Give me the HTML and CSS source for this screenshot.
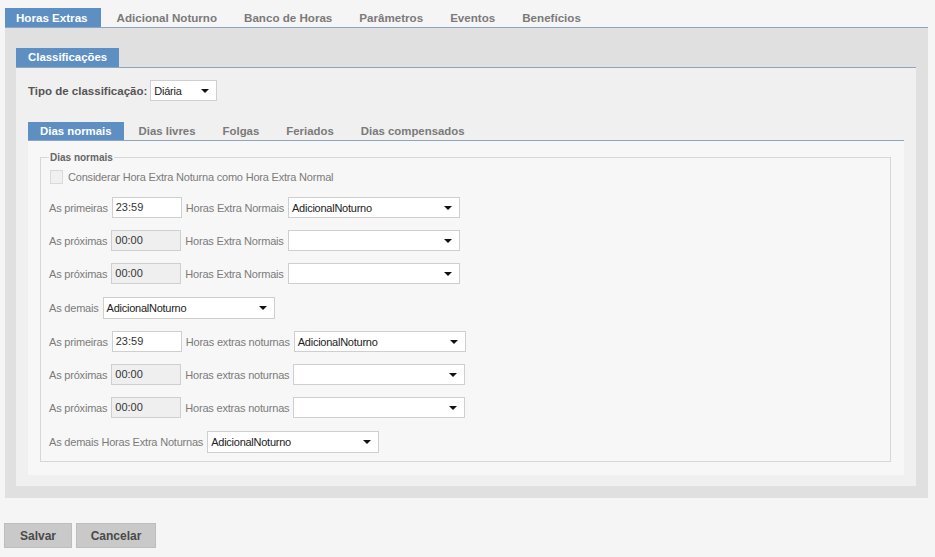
FILE: index.html
```html
<!DOCTYPE html>
<html lang="pt">
<head>
<meta charset="utf-8">
<title>Horas Extras</title>
<link rel="stylesheet" href="styles.css">
</head>
<body>
<div class="page">
  <div class="tabs tabs-top">
    <div class="tab active">Horas Extras</div>
    <div class="tab">Adicional Noturno</div>
    <div class="tab">Banco de Horas</div>
    <div class="tab">Parâmetros</div>
    <div class="tab">Eventos</div>
    <div class="tab">Benefícios</div>
  </div>
  <div class="outer">
    <div class="tabs tabs-class">
      <div class="tab active">Classificações</div>
    </div>
    <div class="class-panel">
      <div class="tipo-row">
        <span class="tipo-label">Tipo de classificação:</span>
        <div class="select select-tipo"><span class="sel-text">Diária</span><span class="caret"></span></div>
      </div>
      <div class="tabs tabs-days">
        <div class="tab active">Dias normais</div>
        <div class="tab">Dias livres</div>
        <div class="tab">Folgas</div>
        <div class="tab">Feriados</div>
        <div class="tab">Dias compensados</div>
      </div>
      <div class="days-panel">
        <div class="group">
          <div class="legend">Dias normais</div>
          <div class="check-row">
            <span class="checkbox"></span>
            <span class="label">Considerar Hora Extra Noturna como Hora Extra Normal</span>
          </div>
          <div class="row">
            <span class="label">As primeiras</span>
            <div class="input">23:59</div>
            <span class="label">Horas Extra Normais</span>
            <div class="select"><span class="sel-text">AdicionalNoturno</span><span class="caret"></span></div>
          </div>
          <div class="row">
            <span class="label">As próximas</span>
            <div class="input disabled">00:00</div>
            <span class="label">Horas Extra Normais</span>
            <div class="select"><span class="sel-text"></span><span class="caret"></span></div>
          </div>
          <div class="row">
            <span class="label">As próximas</span>
            <div class="input disabled">00:00</div>
            <span class="label">Horas Extra Normais</span>
            <div class="select"><span class="sel-text"></span><span class="caret"></span></div>
          </div>
          <div class="row row-wide">
            <span class="label">As demais</span>
            <div class="select"><span class="sel-text">AdicionalNoturno</span><span class="caret"></span></div>
          </div>
          <div class="row">
            <span class="label">As primeiras</span>
            <div class="input">23:59</div>
            <span class="label">Horas extras noturnas</span>
            <div class="select"><span class="sel-text">AdicionalNoturno</span><span class="caret"></span></div>
          </div>
          <div class="row">
            <span class="label">As próximas</span>
            <div class="input disabled">00:00</div>
            <span class="label">Horas extras noturnas</span>
            <div class="select"><span class="sel-text"></span><span class="caret"></span></div>
          </div>
          <div class="row">
            <span class="label">As próximas</span>
            <div class="input disabled">00:00</div>
            <span class="label">Horas extras noturnas</span>
            <div class="select"><span class="sel-text"></span><span class="caret"></span></div>
          </div>
          <div class="row row-wide">
            <span class="label">As demais Horas Extra Noturnas</span>
            <div class="select"><span class="sel-text">AdicionalNoturno</span><span class="caret"></span></div>
          </div>
        </div>
      </div>
    </div>
  </div>
  <div class="buttons">
    <div class="btn btn-save">Salvar</div>
    <div class="btn btn-cancel">Cancelar</div>
  </div>
</div>
</body>
</html>
```

FILE: styles.css
```css
* { box-sizing: border-box; }
html, body { margin: 0; padding: 0; }
body {
  background: #f5f5f5;
  font-family: "Liberation Sans", Arial, sans-serif;
  color: #777;
  width: 935px;
  height: 557px;
  overflow: hidden;
}
.page {
  padding: 8px 7px 0 5px;
}
.tabs {
  display: flex;
  align-items: flex-end;
  border-bottom: 1px solid #8ea5bd;
}
.tab {
  font-weight: bold;
  font-size: 11.4px;
  color: #7a7a7a;
  padding: 0 12px;
  margin-right: 3px;
  height: 19px;
  line-height: 19px;
  white-space: nowrap;
}
.tab.active {
  background: #5d8fc3;
  color: #fff;
}
.tabs-top .tab { font-size: 11.6px; }
.tabs-top .tab:first-child { padding-left: 11px; padding-right: 13px; margin-right: 4px; }
.outer {
  background: #e0e0e0;
  padding: 20px 12px 11px 11px;
  height: 470px;
}
.tabs-class .tab { padding-left: 12px; padding-right: 12px; }
.class-panel {
  background: #f0f0f0;
  padding: 12px 12px 12px 12px;
  height: 418px;
}
.tipo-row {
  display: flex;
  align-items: center;
  gap: 3px;
  height: 21px;
}
.tipo-label {
  font-weight: bold;
  font-size: 11.5px;
  color: #555;
}
.select {
  display: flex;
  align-items: center;
  justify-content: space-between;
  width: 172px;
  height: 21px;
  background: #fff;
  border: 1px solid #cfcfcf;
  padding: 0 7px 0 3px;
  font-size: 11px;
  letter-spacing: -0.25px;
  color: #222;
}
.select-tipo { width: 67px; height: 21px; }
.caret {
  width: 0;
  height: 0;
  border-left: 4px solid transparent;
  border-right: 4px solid transparent;
  border-top: 4px solid #111;
}
.tabs-days {
  margin-top: 21px;
}
.tabs-days .tab { height: 18px; line-height: 18px; }
.days-panel {
  background: #f7f7f7;
  padding: 16px 13px 13px 12px;
  height: 334px;
}
.group {
  border: 1px solid #d7d7d7;
  height: 305px;
  padding: 0 8px;
}
.legend {
  font-size: 10px;
  font-weight: bold;
  color: #666;
  margin-top: -6px;
  background: #f7f7f7;
  width: max-content;
  padding: 0 1px;
  line-height: 12px;
}
.check-row {
  display: flex;
  align-items: center;
  gap: 5px;
  margin-top: 5px;
  height: 16px;
  margin-left: 1px;
}
.checkbox {
  width: 13px;
  height: 14px;
  border: 1px solid #d9d9d9;
  background: #f0f0f0;
}
.label {
  font-size: 11px;
  letter-spacing: -0.2px;
  color: #7b7b7b;
  white-space: nowrap;
}
.row {
  display: flex;
  align-items: center;
  gap: 4px;
  height: 21px;
  margin-top: 12px;
}
.row-wide { margin-top: 13px; height: 22px; }
.row-wide .select { height: 22px; }
.check-row + .row { margin-top: 12px; }
.input {
  width: 70px;
  height: 21px;
  border: 1px solid #cfcfcf;
  background: #fff;
  font-size: 11px;
  color: #333;
  line-height: 19px;
  padding-left: 3px;
}
.input.disabled { background: #efefef; }
.buttons {
  display: flex;
  gap: 4px;
  margin-top: 25px;
  margin-left: -1px;
}
.btn {
  height: 25px;
  line-height: 24px;
  background: #c9c9c9;
  border: 1px solid #bdbdbd;
  font-weight: bold;
  font-size: 12px;
  color: #4a4a4a;
  text-align: center;
}
.btn-save { width: 68px; }
.btn-cancel { width: 80px; }
```
